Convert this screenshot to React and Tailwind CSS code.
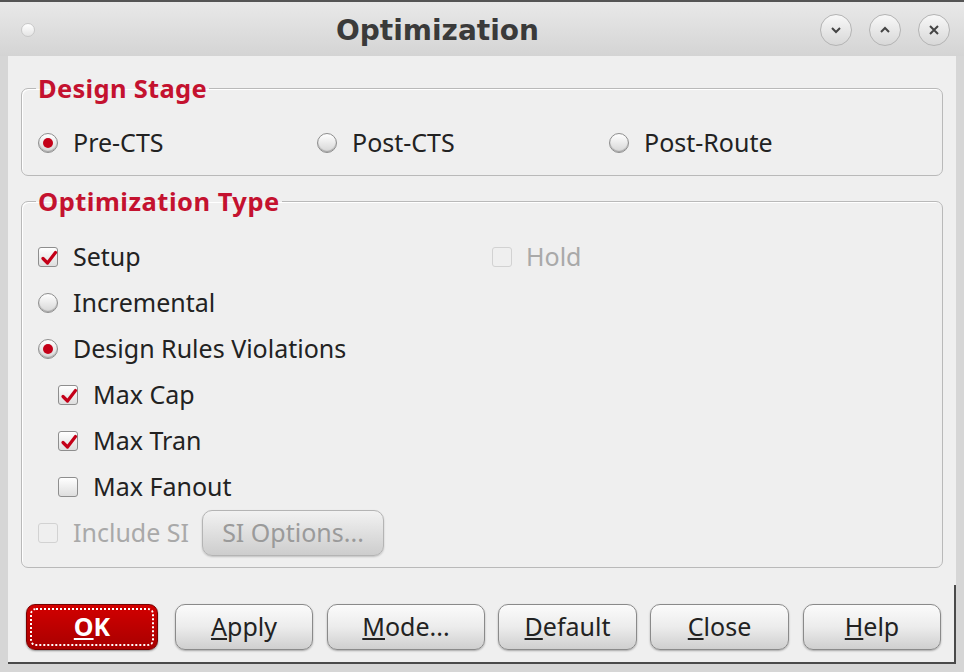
import React from "react"

const body = { fontFamily: '"Noto Sans", "Open Sans", sans-serif' }

function Check({ checked, disabled }) {
  return (
    <span
      className={`relative inline-block h-[20px] w-[20px] shrink-0 rounded-[3px] border ${
        disabled ? "border-[#d2d2d2] bg-[#efefef]" : "border-[#8e8e8e] bg-gradient-to-b from-[#ffffff] to-[#dedede]"
      }`}
    >
      {checked && (
        <svg viewBox="0 0 20 20" className="absolute left-0 top-0 h-[20px] w-[20px]">
          <path d="M4 10.5 L8.5 15 L16.5 4.5" fill="none" stroke="#c40018" strokeWidth="3.2" strokeLinecap="round" strokeLinejoin="round" />
        </svg>
      )}
    </span>
  )
}

function Radio({ checked }) {
  return (
    <span className="relative inline-flex h-[20px] w-[20px] shrink-0 items-center justify-center rounded-full border border-[#8e8e8e] bg-gradient-to-b from-[#ffffff] to-[#d6d6d6] shadow-[inset_0_-1px_1px_rgba(0,0,0,0.25)]">
      {checked && <span className="h-[10px] w-[10px] rounded-full bg-[#c40018]" />}
    </span>
  )
}

function Row({ children, className = "" }) {
  return <div className={`flex h-[30px] items-center ${className}`}>{children}</div>
}

function Btn({ w, children, ok }) {
  if (ok) {
    return (
      <div className={`${w} flex h-[46px] items-center justify-center rounded-[9px] border border-[#7a0000] bg-gradient-to-b from-[#d20000] to-[#a80000] p-[3px] shadow-[0_1px_2px_rgba(0,0,0,0.4)]`}>
        <div className="flex h-full w-full items-center justify-center rounded-[6px] border-2 border-dotted border-white text-[25px] font-bold text-white">
          {children}
        </div>
      </div>
    )
  }
  return (
    <div className={`${w} flex h-[46px] items-center justify-center rounded-[10px] border border-[#8a8a8a] bg-gradient-to-b from-[#fbfbfb] via-[#ececec] to-[#cfcfcf] text-[25px] text-[#222] shadow-[0_1px_2px_rgba(0,0,0,0.3)]`}>
      {children}
    </div>
  )
}

function Circle({ children }) {
  return (
    <div className="flex h-[32px] w-[32px] items-center justify-center rounded-full border border-[#b4b4b4] bg-gradient-to-b from-[#f8f8f8] to-[#d8d8d8]">
      {children}
    </div>
  )
}

export default function App() {
  return (
    <div className="h-[672px] w-[964px] overflow-hidden bg-[#d6d6d6]" style={body}>
      {/* title bar */}
      <div className="flex h-[56px] items-center border-t-2 border-[#555] bg-gradient-to-b from-[#e9e9e9] to-[#d4d4d4] pt-[2px]">
        <div className="ml-[21px] h-[14px] w-[14px] rounded-full border border-[#c8c8c8] bg-gradient-to-b from-white to-[#e4e4e4]" />
        <div
          className="ml-[301px] mt-[2px] text-[28px] font-bold leading-none text-[#3a3a3a]"
          style={{ fontFamily: '"DejaVu Sans", sans-serif' }}
        >
          Optimization
        </div>
        <div className="ml-auto mr-[14px] flex gap-[17px]">
          <Circle>
            <svg viewBox="0 0 16 16" className="h-[16px] w-[16px]">
              <path d="M4 6 L8 10 L12 6" fill="none" stroke="#444" strokeWidth="2" />
            </svg>
          </Circle>
          <Circle>
            <svg viewBox="0 0 16 16" className="h-[16px] w-[16px]">
              <path d="M4 10 L8 6 L12 10" fill="none" stroke="#444" strokeWidth="2" />
            </svg>
          </Circle>
          <Circle>
            <svg viewBox="0 0 16 16" className="h-[16px] w-[16px]">
              <path d="M4 4 L12 12 M12 4 L4 12" fill="none" stroke="#444" strokeWidth="2" />
            </svg>
          </Circle>
        </div>
      </div>

      {/* content */}
      <div className="mx-[8px] flex h-[608px] flex-col bg-[#efefef] text-[25px] text-[#222]">
        <fieldset className="mx-[13px] mt-[18px] h-[102px] rounded-[7px] border border-[#b9b9b9] px-[16px] shadow-[inset_1px_1px_0_#fff]">
          <legend className="ml-[-2px] px-[2px] text-[25.5px] font-bold leading-[28px] tracking-[0.3px] text-[#c4122f]">Design Stage</legend>
          <Row className="mt-[26px]">
            <div className="flex w-[279px] items-center gap-[15px]">
              <Radio checked />
              <span>Pre-CTS</span>
            </div>
            <div className="flex w-[292px] items-center gap-[15px]">
              <Radio />
              <span>Post-CTS</span>
            </div>
            <div className="flex items-center gap-[15px]">
              <Radio />
              <span>Post-Route</span>
            </div>
          </Row>
        </fieldset>

        <fieldset className="mx-[13px] mt-[11px] h-[381px] rounded-[7px] border border-[#b9b9b9] px-[16px] shadow-[inset_1px_1px_0_#fff]">
          <legend className="ml-[-2px] px-[2px] text-[25.5px] font-bold leading-[28px] tracking-[0.5px] text-[#c4122f]">Optimization Type</legend>
          <div className="mt-[27px] flex flex-col gap-[16px]">
            <Row>
              <div className="flex w-[454px] items-center gap-[15px]">
                <Check checked />
                <span>Setup</span>
              </div>
              <div className="flex items-center gap-[14px] text-[#a9a9a9]">
                <Check disabled />
                <span>Hold</span>
              </div>
            </Row>
            <Row className="gap-[15px]">
              <Radio />
              <span>Incremental</span>
            </Row>
            <Row className="gap-[15px]">
              <Radio checked />
              <span>Design Rules Violations</span>
            </Row>
            <Row className="gap-[15px] pl-[20px]">
              <Check checked />
              <span>Max Cap</span>
            </Row>
            <Row className="gap-[15px] pl-[20px]">
              <Check checked />
              <span>Max Tran</span>
            </Row>
            <Row className="gap-[15px] pl-[20px]">
              <Check />
              <span>Max Fanout</span>
            </Row>
            <Row className="gap-[15px] text-[#a9a9a9]">
              <Check disabled />
              <span>Include SI</span>
              <div className="ml-[-2px] flex h-[46px] w-[182px] items-center justify-center rounded-[10px] border border-[#b4b4b4] bg-gradient-to-b from-[#f2f2f2] to-[#cdcdcd] text-[#9a9a9a] shadow-[0_1px_2px_rgba(0,0,0,0.2)]">
                SI Options...
              </div>
            </Row>
          </div>
        </fieldset>

        <div className="mt-auto flex h-[79px] border-b-2 border-r-2 border-[#4a4a4a] pl-[18px] pt-[19px]">
          <Btn w="w-[132px]" ok>
            <span><u>O</u>K</span>
          </Btn>
          <div className="ml-[17px]">
            <Btn w="w-[138px]">
              <span><u>A</u>pply</span>
            </Btn>
          </div>
          <div className="ml-[14px]">
            <Btn w="w-[158px]">
              <span><u>M</u>ode...</span>
            </Btn>
          </div>
          <div className="ml-[13px]">
            <Btn w="w-[139px]">
              <span><u>D</u>efault</span>
            </Btn>
          </div>
          <div className="ml-[13px]">
            <Btn w="w-[139px]">
              <span><u>C</u>lose</span>
            </Btn>
          </div>
          <div className="ml-[14px]">
            <Btn w="w-[138px]">
              <span><u>H</u>elp</span>
            </Btn>
          </div>
        </div>
      </div>
    </div>
  )
}
